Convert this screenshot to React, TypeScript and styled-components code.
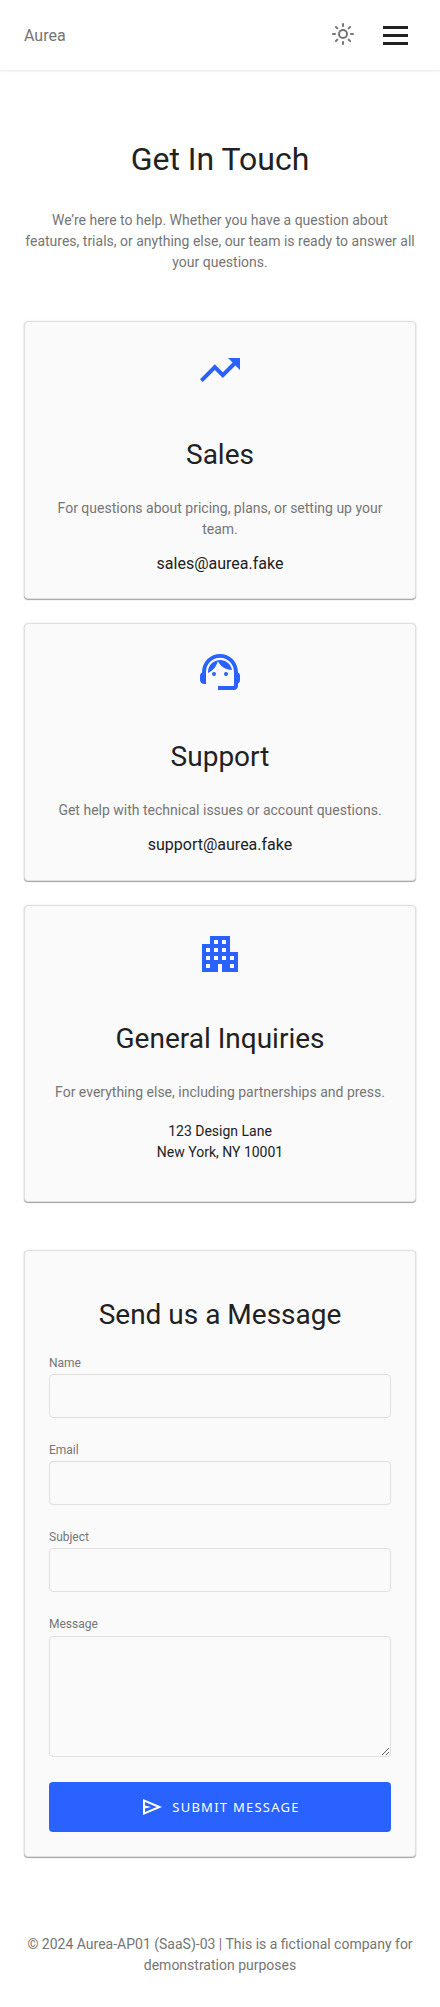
import React from "react";
import styled, { createGlobalStyle } from "styled-components";
import { Sun } from "lucide-react";

const Global = createGlobalStyle`
  html, body { margin: 0; padding: 0; background: #fff; }
  body { font-family: Roboto, "Liberation Sans", sans-serif; color: #212121; }
  * { box-sizing: border-box; }
`;

const Header = styled.header`
  height: 70px;
  background: #fff;
  box-shadow: 0 1px 3px rgba(0, 0, 0, 0.1);
  display: flex;
  align-items: center;
  justify-content: space-between;
  padding: 0 32px 0 24px;
`;
const Logo = styled.span`
  font-size: 16px;
  color: #757575;
`;
const HeaderActions = styled.div`
  display: flex;
  align-items: center;
  gap: 28px;
`;
const ThemeButton = styled.button`
  border: 0;
  background: none;
  padding: 0;
  display: flex;
  color: #757575;
  margin-top: -3px;
`;
const Burger = styled.div`
  width: 25px;
  display: flex;
  flex-direction: column;
  gap: 5px;
`;
const BurgerBar = styled.span`
  display: block;
  height: 3px;
  background: #212121;
`;
const Main = styled.main`
  padding: 64px 24px 0;
`;
const PageTitle = styled.h1`
  margin: 0;
  font-size: 32px;
  line-height: 50px;
  font-weight: 400;
  text-align: center;
`;
const Lead = styled.p`
  margin: 26px 0 48px;
  font-size: 14px;
  line-height: 21px;
  color: #757575;
  text-align: center;
`;
const Cards = styled.div`
  display: flex;
  flex-direction: column;
  gap: 24px;
`;
const Card = styled.section`
  background: #fafafa;
  border: 1px solid #e0e0e0;
  border-radius: 4px;
  box-shadow: 0 1px 1px rgba(0, 0, 0, 0.35), 0 0 3px rgba(0, 0, 0, 0.08);
  padding: 24px;
  text-align: center;
`;
const IconWrap = styled.div`
  height: 48px;
  display: flex;
  justify-content: center;
  color: #2962ff;
`;
const CardTitle = styled.h2`
  margin: 39px 0 21px;
  font-size: 28px;
  line-height: 44px;
  font-weight: 400;
`;
const CardText = styled.p`
  margin: 0 0 14px;
  font-size: 14px;
  line-height: 21px;
  color: #757575;
`;
const CardContact = styled.p`
  margin: 0;
  font-size: 16px;
  line-height: 20.4px;
`;
const Address = styled.p`
  margin: 18px 0 14px;
  font-size: 14px;
  line-height: 21px;
`;
const FormCard = styled(Card)`
  margin-top: 48px;
  text-align: left;
`;
const FormTitle = styled.h2`
  margin: 18px 0 18px;
  font-size: 28px;
  line-height: 44px;
  font-weight: 400;
  text-align: center;
`;
const Field = styled.div`
  margin-bottom: 24px;
`;
const Label = styled.label`
  display: block;
  font-size: 12px;
  line-height: 16px;
  margin-bottom: 3px;
  color: #757575;
`;
const Input = styled.input`
  display: block;
  width: 100%;
  height: 44px;
  background: #fafafa;
  border: 1px solid #e0e0e0;
  border-radius: 4px;
`;
const Textarea = styled.textarea`
  display: block;
  width: 100%;
  height: 121px;
  margin-top: 4px;
  background: #fafafa;
  border: 1px solid #e0e0e0;
  border-radius: 4px;
`;
const Submit = styled.button`
  width: 100%;
  height: 50px;
  margin-top: 25px;
  border: 0;
  border-radius: 4px;
  background: #2962ff;
  color: #fff;
  display: flex;
  align-items: center;
  justify-content: center;
  gap: 8px;
  font-family: "Noto Sans", sans-serif;
  font-size: 13px;
  letter-spacing: 1.25px;
  text-transform: uppercase;
`;
const Footer = styled.footer`
  padding: 77px 24px 30px;
  text-align: center;
  font-size: 14px;
  line-height: 21px;
  color: #757575;
`;

const Icon = ({ size = 48, children }: { size?: number; children: React.ReactNode }) => (
  <svg width={size} height={size} viewBox="0 0 24 24" fill="currentColor" fillRule="evenodd">{children}</svg>
);
const SendIcon = () => (
  <svg width={24} height={24} viewBox="0 -960 960 960" fill="currentColor">
    <path d="M120-160v-640l760 320-760 320Zm80-120 474-200-474-200v140l240 60-240 60v140Z" />
  </svg>
);

const Fields = [
  { id: "name", label: "Name" },
  { id: "email", label: "Email" },
  { id: "subject", label: "Subject" },
];

export default function App() {
  return (
    <>
      <Global />
      <Header>
        <Logo>Aurea</Logo>
        <HeaderActions>
          <ThemeButton aria-label="Toggle theme"><Sun size={24} strokeWidth={2} /></ThemeButton>
          <Burger>
            <BurgerBar />
            <BurgerBar />
            <BurgerBar />
          </Burger>
        </HeaderActions>
      </Header>
      <Main>
        <PageTitle>Get In Touch</PageTitle>
        <Lead>We’re here to help. Whether you have a question about features, trials, or anything else, our team is ready to answer all your questions.</Lead>
        <Cards>
          <Card>
            <IconWrap>
              <Icon><path d="M16 6l2.29 2.29-4.88 4.88-4-4L2 16.59 3.41 18l6-6 4 4 6.3-6.29L22 12V6z" /></Icon>
            </IconWrap>
            <CardTitle>Sales</CardTitle>
            <CardText>For questions about pricing, plans, or setting up your team.</CardText>
            <CardContact>sales@aurea.fake</CardContact>
          </Card>
          <Card>
            <IconWrap>
              <Icon>
                <path d="M21 12.22C21 6.73 16.74 3 12 3c-4.69 0-9 3.65-9 9.28-.6.34-1 .98-1 1.72v2c0 1.1.9 2 2 2h1v-6.1c0-3.87 3.13-7 7-7s7 3.13 7 7V19h-8v2h8c1.1 0 2-.9 2-2v-1.22c.59-.31 1-.92 1-1.64v-2.3c0-.7-.41-1.31-1-1.62z" />
                <circle cx="9" cy="13" r="1" />
                <circle cx="15" cy="13" r="1" />
                <path d="M18 11.03C17.52 8.18 15.04 6 12.05 6c-3.03 0-6.29 2.51-6.03 6.45 2.47-1.01 4.33-3.21 4.86-5.89 1.31 2.63 4 4.44 7.12 4.47z" />
              </Icon>
            </IconWrap>
            <CardTitle>Support</CardTitle>
            <CardText>Get help with technical issues or account questions.</CardText>
            <CardContact>support@aurea.fake</CardContact>
          </Card>
          <Card>
            <IconWrap>
              <Icon><path d="M17 11V3H7v4H3v14h8v-4h2v4h8V11h-4zM7 19H5v-2h2v2zm0-4H5v-2h2v2zm0-4H5V9h2v2zm4 4H9v-2h2v2zm0-4H9V9h2v2zm0-4H9V5h2v2zm4 8h-2v-2h2v2zm0-4h-2V9h2v2zm0-4h-2V5h2v2zm4 12h-2v-2h2v2zm0-4h-2v-2h2v2z" /></Icon>
            </IconWrap>
            <CardTitle>General Inquiries</CardTitle>
            <CardText>For everything else, including partnerships and press.</CardText>
            <Address>123 Design Lane<br />New York, NY 10001</Address>
          </Card>
        </Cards>
        <FormCard>
          <FormTitle>Send us a Message</FormTitle>
          {Fields.map((f) => (
            <Field key={f.id}>
              <Label htmlFor={f.id}>{f.label}</Label>
              <Input id={f.id} type="text" />
            </Field>
          ))}
          <Field>
            <Label htmlFor="message">Message</Label>
            <Textarea id="message" />
          </Field>
          <Submit>
            <SendIcon />
            Submit Message
          </Submit>
        </FormCard>
      </Main>
      <Footer>© 2024 Aurea-AP01 (SaaS)-03 | This is a fictional company for demonstration purposes</Footer>
    </>
  );
}
